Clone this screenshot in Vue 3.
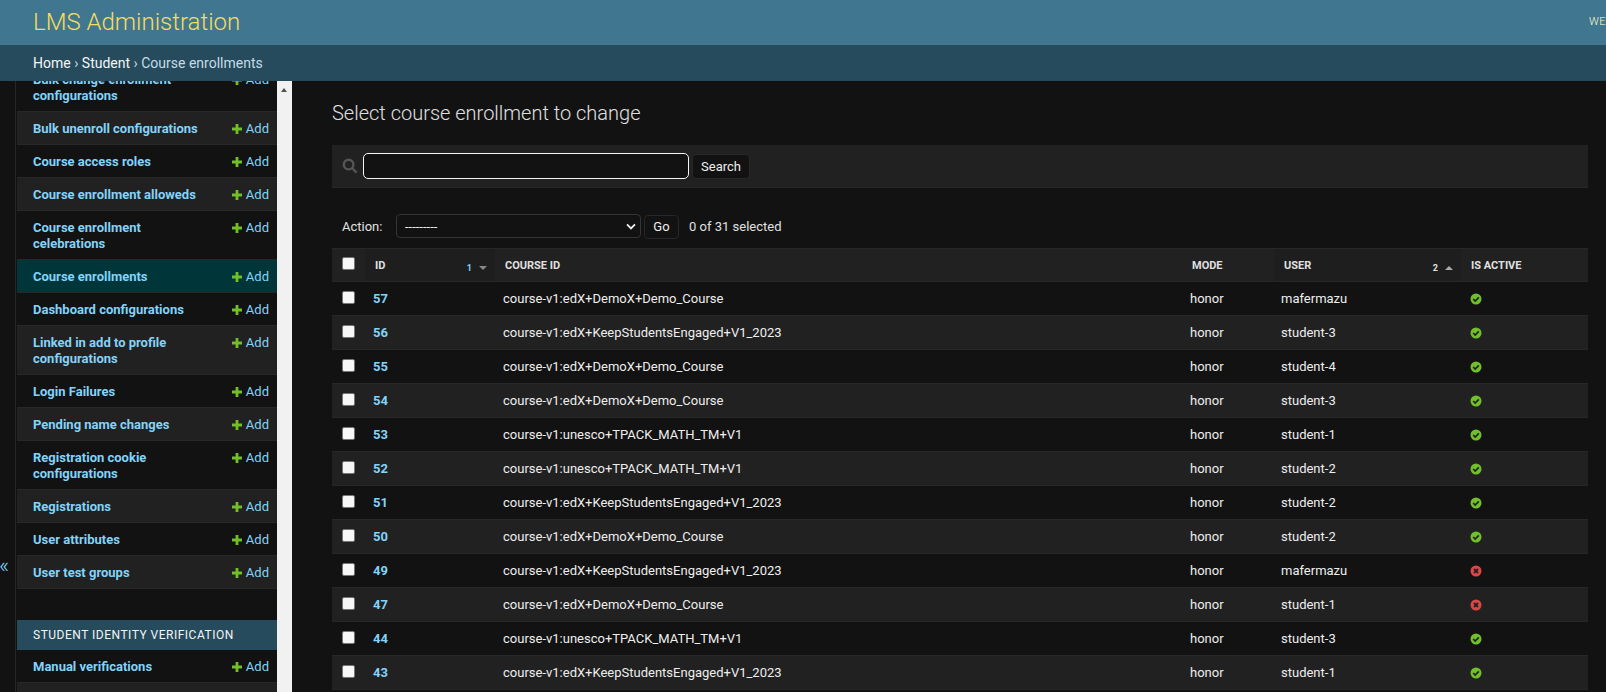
<template>
  <div class="page">
    <header class="topbar">
      <div class="brand">LMS Administration</div>
      <div class="user-tools">WELCOME, ADMIN</div>
    </header>
    <div class="crumbs">
      <a>Home</a> › <a>Student</a> › Course enrollments
    </div>

    <div class="main">
      <div class="toggle"><span>«</span></div>

      <nav class="sidebar">
        <div class="sidebar-inner">
          <div
            v-for="(m, i) in studentModels"
            :key="m.name"
            class="nav-row"
            :class="{ alt: i % 2 === 1, current: m.name === 'Course enrollments' }"
          >
            <a class="nav-name">{{ m.name }}</a>
            <a class="nav-add"><svg class="plus" viewBox="0 0 12 12"><path d="M4.6 1h2.8v3.6H11v2.8H7.4V11H4.6V7.4H1V4.6h3.6z" /></svg>Add</a>
          </div>
          <div class="nav-caption">STUDENT IDENTITY VERIFICATION</div>
          <div
            v-for="(m, i) in verificationModels"
            :key="m"
            class="nav-row"
            :class="{ alt: i % 2 === 1 }"
          >
            <a class="nav-name">{{ m }}</a>
            <a class="nav-add"><svg class="plus" viewBox="0 0 12 12"><path d="M4.6 1h2.8v3.6H11v2.8H7.4V11H4.6V7.4H1V4.6h3.6z" /></svg>Add</a>
          </div>
        </div>
      </nav>

      <div class="scrollbar"><span class="scroll-up"></span></div>

      <section class="content">
        <h1>Select course enrollment to change</h1>

        <div class="search-bar">
          <svg class="search-icon" viewBox="0 0 16 16">
            <circle cx="6.6" cy="6.6" r="4.8" />
            <path d="M10 10l4.6 4.6" />
          </svg>
          <div class="search-input"></div>
          <button class="btn search-btn">Search</button>
        </div>

        <div class="actions">
          <label>Action:</label>
          <div class="fake-select">
            <span>---------</span>
            <svg viewBox="0 0 10 7"><path d="M1 1.4l4 4 4-4" /></svg>
          </div>
          <button class="btn go-btn">Go</button>
          <span class="counter">0 of 31 selected</span>
        </div>

        <div class="table">
          <div class="tr head">
            <div class="cell c-check"><span class="box"></span></div>
            <div class="cell c-id sorted">
              <span>ID</span>
              <span class="sort"><i>1</i><b class="arrow down"></b></span>
            </div>
            <div class="cell c-course"><span>COURSE ID</span></div>
            <div class="cell c-mode"><span>MODE</span></div>
            <div class="cell c-user sorted">
              <span>USER</span>
              <span class="sort"><i>2</i><b class="arrow up"></b></span>
            </div>
            <div class="cell c-active"><span>IS ACTIVE</span></div>
          </div>
          <div v-for="(r, i) in rows" :key="r.id" class="tr" :class="{ alt: i % 2 === 1 }">
            <div class="cell c-check"><span class="box"></span></div>
            <div class="cell c-id"><a>{{ r.id }}</a></div>
            <div class="cell c-course">{{ r.course }}</div>
            <div class="cell c-mode">honor</div>
            <div class="cell c-user">{{ r.user }}</div>
            <div class="cell c-active">
              <svg v-if="r.active" class="state" viewBox="0 0 12 12">
                <circle cx="6" cy="6" r="5.5" fill="#70bf2b" />
                <path d="M3.2 6l2 2 3.6-3.6" fill="none" stroke="#212121" stroke-width="1.7" />
              </svg>
              <svg v-else class="state" viewBox="0 0 12 12">
                <circle cx="6" cy="6" r="5.5" fill="#dd4646" />
                <path d="M4 4l4 4M8 4l-4 4" fill="none" stroke="#212121" stroke-width="1.8" />
              </svg>
            </div>
          </div>
        </div>
      </section>
    </div>
  </div>
</template>

<script setup>
const studentModels = [
  { name: 'Bulk change enrollment configurations' },
  { name: 'Bulk unenroll configurations' },
  { name: 'Course access roles' },
  { name: 'Course enrollment alloweds' },
  { name: 'Course enrollment celebrations' },
  { name: 'Course enrollments' },
  { name: 'Dashboard configurations' },
  { name: 'Linked in add to profile configurations' },
  { name: 'Login Failures' },
  { name: 'Pending name changes' },
  { name: 'Registration cookie configurations' },
  { name: 'Registrations' },
  { name: 'User attributes' },
  { name: 'User test groups' }
]

const verificationModels = ['Manual verifications', 'Software secure photo verifications']

const demo = 'course-v1:edX+DemoX+Demo_Course'
const keep = 'course-v1:edX+KeepStudentsEngaged+V1_2023'
const tpack = 'course-v1:unesco+TPACK_MATH_TM+V1'

const rows = [
  { id: 57, course: demo, user: 'mafermazu', active: true },
  { id: 56, course: keep, user: 'student-3', active: true },
  { id: 55, course: demo, user: 'student-4', active: true },
  { id: 54, course: demo, user: 'student-3', active: true },
  { id: 53, course: tpack, user: 'student-1', active: true },
  { id: 52, course: tpack, user: 'student-2', active: true },
  { id: 51, course: keep, user: 'student-2', active: true },
  { id: 50, course: demo, user: 'student-2', active: true },
  { id: 49, course: keep, user: 'mafermazu', active: false },
  { id: 47, course: demo, user: 'student-1', active: false },
  { id: 44, course: tpack, user: 'student-3', active: true },
  { id: 43, course: keep, user: 'student-1', active: true }
]
</script>

<style>
html, body {
  margin: 0;
  height: 100%;
  overflow: hidden;
  background: #121212;
}
</style>

<style scoped>
.page {
  width: 1606px;
  height: 692px;
  overflow: hidden;
  display: flex;
  flex-direction: column;
  font-family: Roboto, "Liberation Sans", sans-serif;
  font-size: 13px;
  color: #eeeeee;
  background: #121212;
}
.topbar {
  flex: none;
  height: 45px;
  background: #417690;
  display: flex;
  align-items: center;
  justify-content: space-between;
  padding-left: 33px;
  padding-bottom: 2px;
  box-sizing: border-box;
  overflow: hidden;
  white-space: nowrap;
}
.brand {
  font-size: 24px;
  font-weight: 300;
  color: #f5dd5d;
}
.user-tools {
  width: 17px;
  overflow: hidden;
  font-size: 11px;
  font-weight: 300;
  color: #ffffcc;
  letter-spacing: 0.5px;
}
.crumbs {
  flex: none;
  height: 36px;
  line-height: 36px;
  padding-left: 33px;
  background: #264b5d;
  color: #c4dce8;
  font-size: 14px;
  font-weight: 400;
}
.crumbs a {
  color: #f5f5f5;
}
.main {
  flex: 1;
  min-height: 0;
  display: flex;
}
.toggle {
  flex: none;
  width: 15px;
  border-right: 1px solid #272727;
  position: relative;
  color: #81d4fa;
  font-size: 22px;
  font-weight: 300;
}
.toggle span {
  position: absolute;
  top: 474px;
  left: -1px;
  line-height: 22px;
}
.sidebar {
  flex: none;
  width: 260px;
  overflow: hidden;
  margin-left: 1px;
}
.sidebar-inner {
  margin-top: -18px;
}
.nav-row {
  display: flex;
  justify-content: space-between;
  align-items: flex-start;
  box-sizing: border-box;
  padding: 9px 8px 7px 16px;
  line-height: 16px;
  border-bottom: 1px solid #272727;
}
.nav-row.alt {
  background: #212121;
}
.nav-row.current {
  background: #00363a;
}
.nav-name {
  width: 165px;
  color: #81d4fa;
  font-weight: 700;
}
.nav-add {
  display: flex;
  align-items: center;
  color: #81d4fa;
  font-weight: 400;
  font-size: 13px;
}
.plus {
  width: 12px;
  height: 12px;
  margin-right: 3px;
  fill: #70bf2b;
}
.nav-caption {
  margin-top: 31px;
  height: 30px;
  line-height: 30px;
  padding-left: 16px;
  background: #264b5d;
  color: #f5f5f5;
  font-size: 12px;
  letter-spacing: 0.5px;
  font-weight: 400;
}
.scrollbar {
  flex: none;
  width: 15px;
  background: #f1f1f1;
  position: relative;
}
.scroll-up {
  position: absolute;
  top: 7px;
  left: 4px;
  border-left: 3.5px solid transparent;
  border-right: 3.5px solid transparent;
  border-bottom: 4px solid #505050;
}
.content {
  flex: 1;
  min-width: 0;
  padding: 0 18px 0 40px;
}
h1 {
  margin: 0;
  padding-top: 20px;
  font-size: 20px;
  line-height: 24px;
  font-weight: 300;
  color: #e0e0e0;
}
.search-bar {
  margin-top: 20px;
  height: 43px;
  box-sizing: border-box;
  display: flex;
  align-items: center;
  background: #212121;
  border-bottom: 1px solid #272727;
  padding-left: 10px;
}
.search-icon {
  width: 16px;
  height: 16px;
  flex: none;
  fill: none;
  stroke: #555555;
  stroke-width: 2.4;
}
.search-input {
  width: 326px;
  height: 26px;
  margin-left: 5px;
  box-sizing: border-box;
  border: 1px solid #f5f5f5;
  border-radius: 5px;
  background: #121212;
}
.btn {
  font-family: inherit;
  font-size: 13px;
  color: #eeeeee;
  background: #121212;
  border: 1px solid #272727;
  border-radius: 4px;
  padding: 0;
}
.search-btn {
  width: 58px;
  height: 25px;
  margin-left: 3px;
}
.actions {
  height: 24px;
  margin-top: 26px;
  display: flex;
  align-items: center;
  padding-left: 10px;
}
.actions label {
  color: #e0e0e0;
  width: 54px;
}
.fake-select {
  width: 245px;
  height: 24px;
  box-sizing: border-box;
  border: 1px solid #353535;
  border-radius: 4px;
  background: #121212;
  display: flex;
  align-items: center;
  justify-content: space-between;
  padding: 0 4px 0 8px;
  color: #eeeeee;
}
.fake-select svg {
  width: 10px;
  height: 7px;
  fill: none;
  stroke: #eeeeee;
  stroke-width: 1.8;
}
.go-btn {
  width: 35px;
  height: 24px;
  margin-left: 3px;
  margin-top: 1px;
}
.counter {
  margin-left: 10px;
  color: #e0e0e0;
}
.table {
  margin-top: 10px;
}
.tr {
  display: flex;
  height: 34px;
  box-sizing: border-box;
  border-bottom: 1px solid #272727;
}
.tr.alt {
  background: #212121;
}
.tr.head {
  background: #212121;
  border-top: 1px solid #272727;
  font-size: 11px;
  font-weight: 700;
  color: #e0e0e0;
}
.cell {
  display: flex;
  align-items: center;
  box-sizing: border-box;
}
.c-check {
  width: 33px;
  padding-left: 10px;
}
.c-id {
  width: 130px;
  padding-left: 8px;
}
.c-id a {
  color: #81d4fa;
  font-weight: 700;
}
.c-course {
  width: 688px;
  padding-left: 8px;
}
.c-mode {
  width: 91px;
  padding-left: 7px;
}
.c-user {
  width: 187px;
  padding-left: 7px;
}
.c-active {
  flex: 1;
  padding-left: 9px;
}
.head .c-id,
.head .c-course,
.head .c-user,
.head .c-active {
  padding-left: 10px;
}
.head .c-mode {
  padding-left: 9px;
}
.head .sorted {
  background: #1e1e1e;
  padding-right: 8px;
  justify-content: space-between;
}
.sort {
  display: flex;
  align-items: center;
  margin-top: 6px;
}
.sort i {
  font-style: normal;
  font-size: 9px;
  color: #81d4fa;
  margin-right: 7px;
}
.c-user .sort i {
  color: #e0e0e0;
}
.arrow {
  width: 0;
  height: 0;
  border-left: 4px solid transparent;
  border-right: 4px solid transparent;
}
.arrow.down {
  border-top: 4px solid #888888;
}
.arrow.up {
  border-bottom: 4px solid #aaaaaa;
}
.box {
  display: block;
  width: 13px;
  height: 13px;
  margin-bottom: 3px;
  box-sizing: border-box;
  background: #f7f7f7;
  border: 1px solid #767676;
  border-radius: 2px;
}
.state {
  width: 12px;
  height: 12px;
}
</style>
